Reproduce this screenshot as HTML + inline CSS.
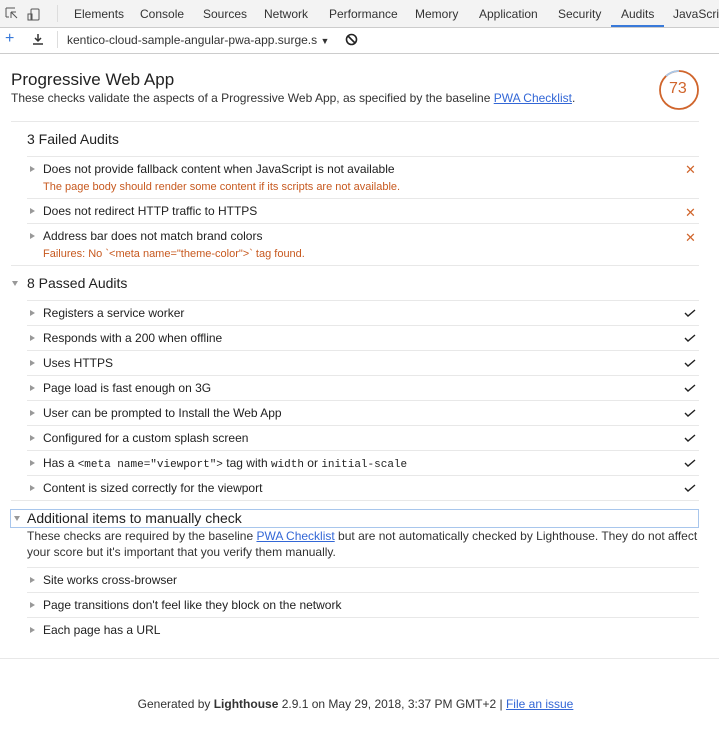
<!DOCTYPE html><html><head><style>
body{margin:0;width:719px;height:736px;position:relative;font-family:"Liberation Sans",sans-serif;color:#212121;background:#fff;overflow:hidden}
.a{position:absolute;white-space:nowrap}
.tb{position:absolute;left:0;top:0;width:719px;height:27px;background:#f3f3f3;border-bottom:1px solid #ccc}
.tb2{position:absolute;left:0;top:28px;width:719px;height:25px;background:#fff;border-bottom:1px solid #ccc}
.tab{position:absolute;top:7px;font-size:12px;color:#333}
.ln{position:absolute;height:1px;background:#e8e8e8;right:20px}
.r{position:absolute;left:43px;font-size:12px;line-height:14px}
.tri{position:absolute;left:30px;width:0;height:0;border-left:5px solid #999;border-top:3.5px solid transparent;border-bottom:3.5px solid transparent}
.trd{position:absolute;width:0;height:0;border-top:5px solid #999;border-left:3.5px solid transparent;border-right:3.5px solid transparent}
.sub{position:absolute;left:43px;font-size:11px;color:#c7591f}
.x{position:absolute;left:685px;color:#d0652c;font-size:13px}
.h{position:absolute;font-size:14px;color:#212121}
a{color:#3367d6;text-decoration:underline}
code{font-family:"Liberation Mono",monospace;font-size:11px}
</style></head><body>
<div class="tb"></div>
<svg class="a" style="left:4px;top:6px" width="40" height="16"><path d="M2 2h9M2 2v9M2 11h3M7 6l6 6M7 6v6M7 6h5" stroke="#555" fill="none"/><rect x="27" y="3" width="8" height="11" rx="1" stroke="#555" fill="none"/><rect x="24" y="8" width="4" height="6" stroke="#555" fill="none"/></svg>
<div class="a" style="left:57px;top:5px;width:1px;height:17px;background:#ddd"></div>
<div class="tab" style="left:74px">Elements</div><div class="tab" style="left:140px">Console</div><div class="tab" style="left:203px">Sources</div><div class="tab" style="left:264px">Network</div><div class="tab" style="left:329px">Performance</div><div class="tab" style="left:415px">Memory</div><div class="tab" style="left:479px">Application</div><div class="tab" style="left:558px">Security</div><div class="tab" style="left:621px">Audits</div><div class="tab" style="left:673px">JavaScript</div>
<div class="a" style="left:611px;top:25px;width:53px;height:2px;background:#3879d9"></div>
<div class="tb2"></div>
<div class="a" style="left:5px;top:30px;font-size:16px;color:#3879d9">+</div>
<svg class="a" style="left:32px;top:33px" width="12" height="13"><path d="M6 1v7M3 5l3 3 3-3M1 11h10" stroke="#333" stroke-width="1.5" fill="none"/></svg>
<div class="a" style="left:57px;top:31px;width:1px;height:17px;background:#ddd"></div>
<div class="a" style="left:67px;top:33px;font-size:12px;color:#333">kentico-cloud-sample-angular-pwa-app.surge.s <span style="font-size:9px">▼</span></div>
<svg class="a" style="left:345px;top:33px" width="13" height="13"><circle cx="6.5" cy="6.5" r="5" stroke="#222" stroke-width="1.6" fill="none"/><path d="M3 3l7 7" stroke="#222" stroke-width="1.6"/></svg>
<div class="a" style="left:11px;top:70px;font-size:17px">Progressive Web App</div>
<div class="a" style="left:11px;top:91px;font-size:12px;color:#333">These checks validate the aspects of a Progressive Web App, as specified by the baseline <a>PWA Checklist</a>.</div>
<svg class="a" style="left:658px;top:69px" width="42" height="42"><circle cx="21" cy="21" r="19" stroke="#d0652c" stroke-width="1.8" fill="none"/><path d="M21 2A19 19 0 0 0 8 7" stroke="#aac8e8" stroke-width="1.8" fill="none"/></svg>
<div class="a" style="left:669px;top:80px;font-size:16px;color:#d0652c">73</div>
<div class="ln" style="left:11px;top:121px"></div>
<div class="h" style="left:27px;top:131px">3 Failed Audits</div>
<div class="ln" style="left:27px;top:156px"></div>
<div class="tri" style="top:166px"></div><div class="r" style="top:162px">Does not provide fallback content when JavaScript is not available</div><div class="sub" style="top:181px">The page body should render some content if its scripts are not available.</div><div class="x" style="top:162px">✕</div>
<div class="ln" style="left:27px;top:198px"></div>
<div class="tri" style="top:208px"></div><div class="r" style="top:204px">Does not redirect HTTP traffic to HTTPS</div><div class="x" style="top:205px">✕</div>
<div class="ln" style="left:27px;top:223px"></div>
<div class="tri" style="top:233px"></div><div class="r" style="top:229px">Address bar does not match brand colors</div><div class="sub" style="top:248px">Failures: No `&lt;meta name="theme-color"&gt;` tag found.</div><div class="x" style="top:230px">✕</div>
<div class="ln" style="left:11px;top:265px"></div>
<div class="trd" style="left:12px;top:281px"></div><div class="h" style="left:27px;top:275px">8 Passed Audits</div>
<div class="ln" style="left:27px;top:300px"></div>
<div class="tri" style="top:310px"></div><div class="r" style="top:306px">Registers a service worker</div>
<div class="ln" style="left:27px;top:325px"></div>
<div class="tri" style="top:335px"></div><div class="r" style="top:331px">Responds with a 200 when offline</div>
<div class="ln" style="left:27px;top:350px"></div>
<div class="tri" style="top:360px"></div><div class="r" style="top:356px">Uses HTTPS</div>
<div class="ln" style="left:27px;top:375px"></div>
<div class="tri" style="top:385px"></div><div class="r" style="top:381px">Page load is fast enough on 3G</div>
<div class="ln" style="left:27px;top:400px"></div>
<div class="tri" style="top:410px"></div><div class="r" style="top:406px">User can be prompted to Install the Web App</div>
<div class="ln" style="left:27px;top:425px"></div>
<div class="tri" style="top:435px"></div><div class="r" style="top:431px">Configured for a custom splash screen</div>
<div class="ln" style="left:27px;top:450px"></div>
<div class="tri" style="top:460px"></div><div class="r" style="top:456px">Has a <code>&lt;meta name="viewport"&gt;</code> tag with <code>width</code> or <code>initial-scale</code></div>
<div class="ln" style="left:27px;top:475px"></div>
<div class="tri" style="top:485px"></div><div class="r" style="top:481px">Content is sized correctly for the viewport</div>
<svg class="a" style="left:684px;top:308px" width="12" height="190"><g stroke="#222" stroke-width="1.4" fill="none"><path d="M1 5l3 3 7-6"/><path d="M1 30l3 3 7-6"/><path d="M1 55l3 3 7-6"/><path d="M1 80l3 3 7-6"/><path d="M1 105l3 3 7-6"/><path d="M1 130l3 3 7-6"/><path d="M1 155l3 3 7-6"/><path d="M1 180l3 3 7-6"/></g></svg>
<div class="ln" style="left:11px;top:500px"></div>
<div class="a" style="left:10px;top:509px;width:687px;height:17px;border:1px solid #a8c6ec"></div>
<div class="trd" style="left:14px;top:516px"></div><div class="h" style="left:27px;top:510px">Additional items to manually check</div>
<div class="a" style="left:27px;top:528px;font-size:12px;line-height:16px;color:#333;white-space:normal;width:680px">These checks are required by the baseline <a>PWA Checklist</a> but are not automatically checked by Lighthouse. They do not affect your score but it's important that you verify them manually.</div>
<div class="ln" style="left:27px;top:567px"></div>
<div class="tri" style="top:577px"></div><div class="r" style="top:573px">Site works cross-browser</div>
<div class="ln" style="left:27px;top:592px"></div>
<div class="tri" style="top:602px"></div><div class="r" style="top:598px">Page transitions don't feel like they block on the network</div>
<div class="ln" style="left:27px;top:617px"></div>
<div class="tri" style="top:627px"></div><div class="r" style="top:623px">Each page has a URL</div>
<div class="a" style="left:0;top:658px;width:719px;height:1px;background:#e8e8e8"></div>
<div class="a" style="left:0;width:711px;text-align:center;top:697px;font-size:12px;color:#333">Generated by <b>Lighthouse</b> 2.9.1 on May 29, 2018, 3:37 PM GMT+2 | <a>File an issue</a></div>
</body></html>
